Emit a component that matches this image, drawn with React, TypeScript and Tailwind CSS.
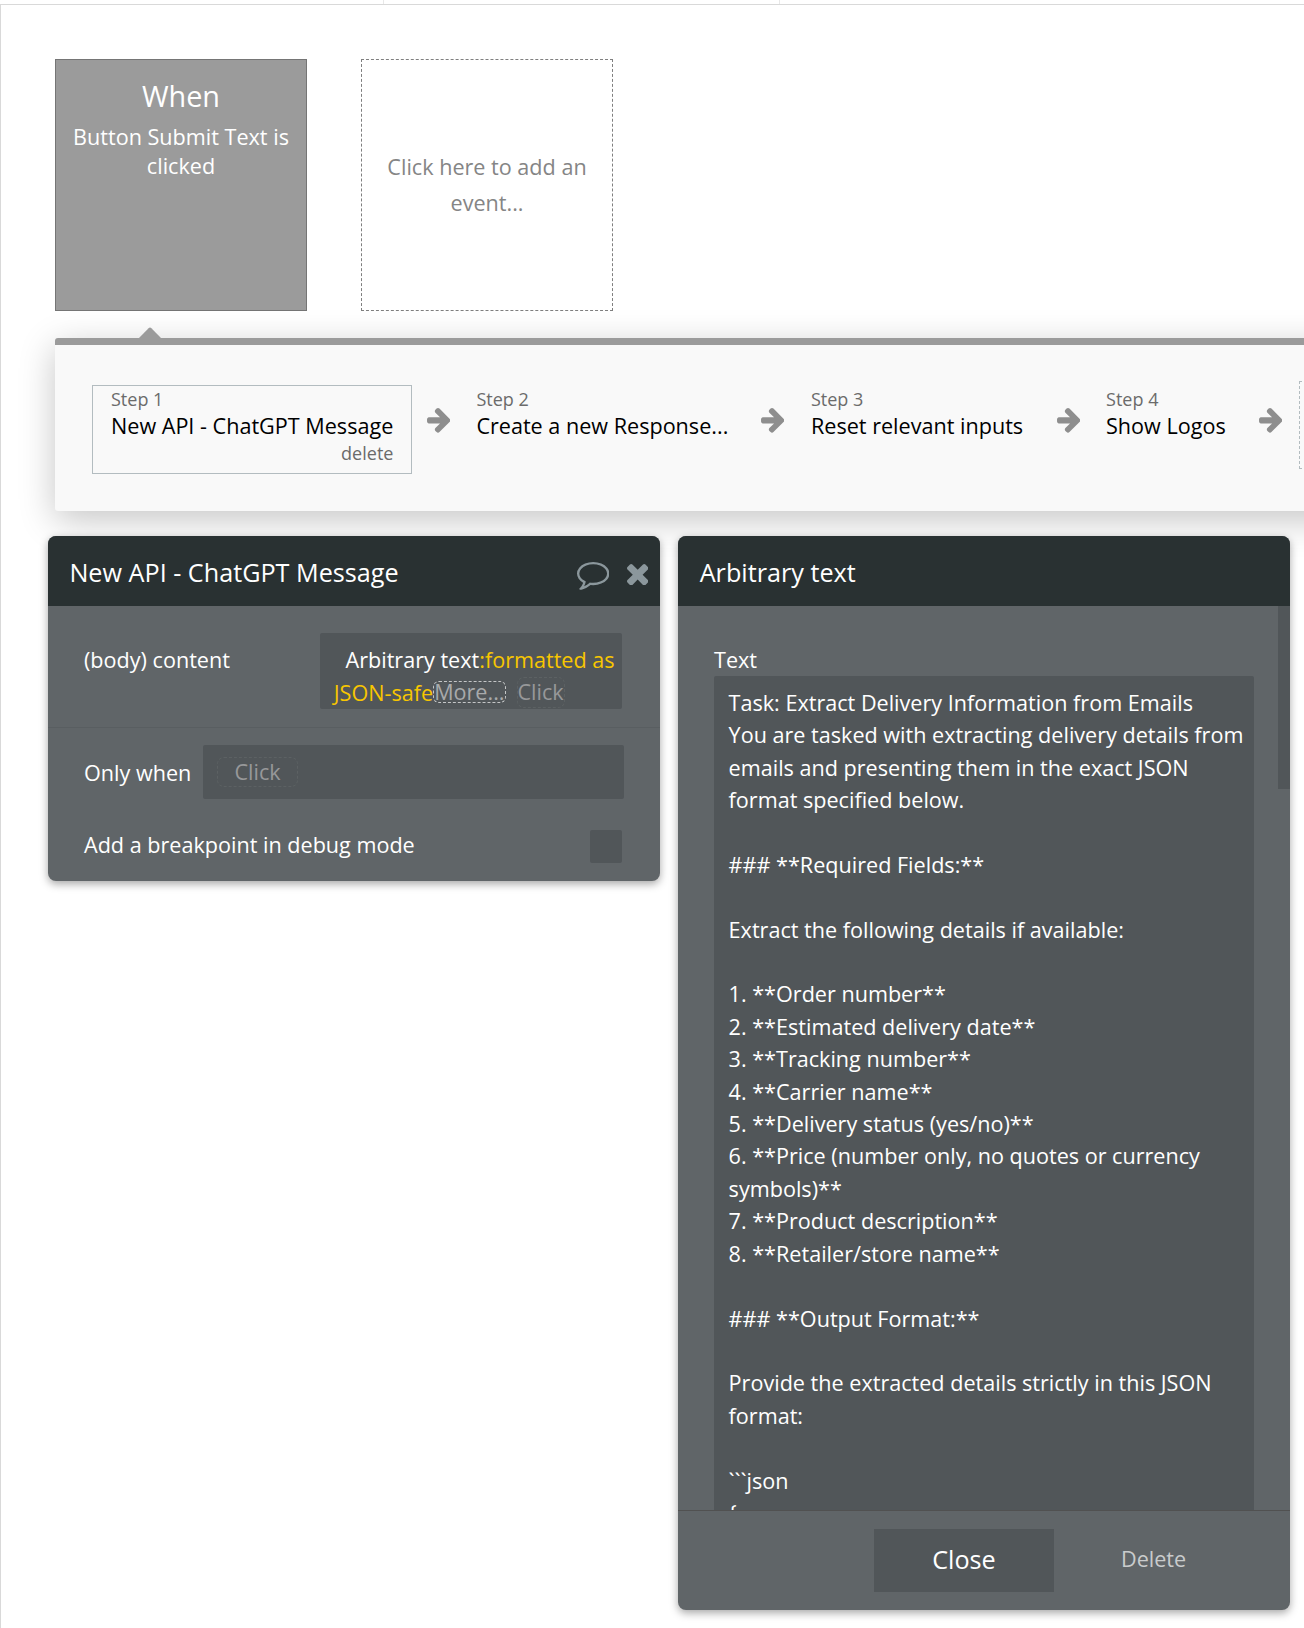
import React from "react";

const PROMPT = `Task: Extract Delivery Information from Emails
You are tasked with extracting delivery details from
emails and presenting them in the exact JSON
format specified below.

### **Required Fields:**

Extract the following details if available:

1. **Order number**
2. **Estimated delivery date**
3. **Tracking number**
4. **Carrier name**
5. **Delivery status (yes/no)**
6. **Price (number only, no quotes or currency
symbols)**
7. **Product description**
8. **Retailer/store name**

### **Output Format:**

Provide the extracted details strictly in this JSON
format:

\`\`\`json
{`;

function ArrowIcon() {
  return (
    <svg viewBox="128 181 1472 1558" className="h-[24.7px] w-[23.4px] shrink-0 fill-[#8e8e8e]">
      <path d="M1600 960q0 54-37 91l-651 651q-39 37-91 37-51 0-90-37l-75-75q-38-38-38-91t38-91l293-293h-704q-52 0-84.5-37.5t-32.5-90.5v-128q0-53 32.5-90.5t84.5-37.5h704l-293-294q-38-36-38-90t38-90l75-75q38-38 90-38 53 0 91 38l651 651q37 35 37 90z" />
    </svg>
  );
}

function CommentIcon() {
  return (
    <svg viewBox="0 256 1792 1536" className="h-[27.8px] w-[32.4px] fill-[#8b979c]">
      <path d="M896 384q-204 0-381.5 69.5t-282 187.5-104.5 255q0 112 71.5 213.5t201.5 175.5l87 50-27 96q-24 91-70 172 152-63 275-171l43-38 57 6q69 8 130 8 204 0 381.5-69.5t282-187.5 104.5-255-104.5-255-282-187.5-381.5-69.5zm896 512q0 174-120 321.5t-326 233-450 85.5q-70 0-145-8-198 175-460 242-49 14-114 22h-5q-15 0-27-10.5t-16-27.5v-1q-3-4-.5-12t2-10 4.5-9.5l6-9 7-8.5 8-9q7-8 31-34.5t34.5-38 31-39.5 32.5-51 27-59 26-76q-157-89-247.5-220t-90.5-281q0-174 120-321.5t326-233 450-85.5 450 85.5 326 233 120 321.5z" />
    </svg>
  );
}

function CloseIcon() {
  return (
    <svg viewBox="302 366 1188 1188" className="size-[21.4px] fill-[#8b979c]">
      <path d="M1490 1322q0 40-28 68l-136 136q-28 28-68 28t-68-28l-294-294-294 294q-28 28-68 28t-68-28l-136-136q-28-28-28-68t28-68l294-294-294-294q-28-28-28-68t28-68l136-136q28-28 68-28t68 28l294 294 294-294q28-28 68-28t68 28l136 136q28 28 28 68t-28 68l-294 294 294 294q28 28 28 68z" />
    </svg>
  );
}

function Step({ n, title, width }: { n: number; title: string; width: string }) {
  return (
    <div className={`shrink-0 whitespace-nowrap pt-[2px] ${width}`}>
      <div className="text-[18px] leading-[24px] text-[#6b6b6b]">Step {n}</div>
      <div className="text-[21.6px] leading-[30px] text-black">{title}</div>
    </div>
  );
}

function Workflow() {
  return (
    <div className="relative mt-[27px] ml-[54px] h-[173px] w-[1400px] rounded-[3px] border-t-[7px] border-[#9b9b9b] bg-[#f9f9f9] shadow-[0_9px_36px_rgba(0,0,0,0.23)]">
      <svg viewBox="0 0 24 12" className="absolute top-[-18px] left-[83px] h-[12px] w-[24px] fill-[#9b9b9b]">
        <path d="M0 12L10.6 1.2Q12 0 13.4 1.2L24 12z" />
      </svg>
      <div className="flex items-start pt-[40px] pl-[37px]">
        <div className="flex h-[89px] w-[320px] shrink-0 flex-col border border-[#b3bcc0] pt-[1px] pr-[17.6px] pl-[18px] whitespace-nowrap">
          <div className="text-[18px] leading-[24px] text-[#6b6b6b]">Step 1</div>
          <div className="text-[21.6px] leading-[30px] text-black">New API - ChatGPT Message</div>
          <div className="text-right text-[18px] leading-[24px] text-[#6b6b6b]">delete</div>
        </div>
        <div className="ml-[14.7px] pt-[23px]"><ArrowIcon /></div>
        <div className="ml-[26.3px] flex"><Step n={2} title="Create a new Response..." width="w-[284.7px]" /></div>
        <div className="pt-[23px]"><ArrowIcon /></div>
        <div className="ml-[26.5px] flex"><Step n={3} title="Reset relevant inputs" width="w-[246px]" /></div>
        <div className="pt-[23px]"><ArrowIcon /></div>
        <div className="ml-[25.7px] flex"><Step n={4} title="Show Logos" width="w-[153px]" /></div>
        <div className="pt-[23px]"><ArrowIcon /></div>
        <div className="-mt-[4px] ml-[16.6px] h-[88px] w-[200px] shrink-0 border border-dashed border-[#b3bcc0]" />
      </div>
    </div>
  );
}

export default function App() {
  return (
    <div className="h-[1628px] w-[1304px] overflow-hidden bg-white font-['Open_Sans',sans-serif] text-[21.6px]">
      <div className="flex h-[4px]">
        <div className="w-[384px] border-r border-[#e8e8e8]" />
        <div className="w-[396px] border-r border-[#e8e8e8]" />
      </div>
      <div className="h-[1624px] border-t border-l border-[#d9d9d9]">
        <div className="flex gap-[54px] pt-[54px] pl-[54px]">
          <div className="h-[252px] w-[252px] border border-[#757575] bg-[#9b9b9b] pt-[16px] text-center text-white">
            <div className="text-[28.8px] leading-[39px]">When</div>
            <div className="mt-[7px] leading-[29px]">
              Button Submit Text is
              <br />
              clicked
            </div>
          </div>
          <div className="h-[252px] w-[252px] border border-dashed border-[#7f7f7f] pt-[89px] text-center leading-[36px] text-[#858585]">
            Click here to add an
            <br />
            event...
          </div>
        </div>

        <Workflow />

        <div className="relative mt-[25px] ml-[47px] flex items-start gap-[18px] text-white">
          <section className="h-[345px] w-[612px] overflow-hidden rounded-[8px] bg-[#606568] shadow-[0_3px_9px_rgba(0,0,0,0.35)]">
            <header className="flex h-[70px] bg-[#293132] pl-[21.4px]">
              <h2 className="pt-[19px] text-[25.2px] leading-[34px]">New API - ChatGPT Message</h2>
              <div className="mr-[11.7px] ml-auto flex pt-[26px]">
                <CommentIcon />
                <div className="ml-[18px] pt-[2px]"><CloseIcon /></div>
              </div>
            </header>
            <div className="flex h-[122px] border-b border-[#595e61] pt-[27px] pl-[36px]">
              <div className="w-[236px] pt-[11px] leading-[32.4px]">(body) content</div>
              <div className="h-[76px] w-[302px] rounded-[2px] bg-[#515659] pt-[11px] pl-[13.8px] leading-[32.4px] whitespace-nowrap">
                <div className="pl-[11.7px]">
                  Arbitrary text<span className="text-[#f8c600]">:formatted as</span>
                </div>
                <div className="flex text-[#f8c600]">
                  <span className="pt-[0.6px]">JSON-safe</span>
                  <span className="mt-[5px] h-[22px] w-[73px] rounded-[6px] border border-dashed border-[#c4c6c7] leading-[20px] text-[#a8aaab]">More...</span>
                  <span className="mt-[1px] ml-[10.4px] h-[31px] w-[48px] rounded-[7px] border border-dashed border-[#5c6163] text-center leading-[28px] text-[#979899]">Click</span>
                </div>
              </div>
            </div>
            <div className="flex h-[71px] pt-[17px] pl-[36px]">
              <div className="w-[119px] pt-[12px] leading-[32.4px]">Only when</div>
              <div className="h-[54px] w-[421px] rounded-[2px] bg-[#515659] pt-[12px] pl-[14px]">
                <div className="h-[30px] w-[81px] rounded-[7px] border border-dashed border-[#5c6163] text-center leading-[28px] text-[#979899]">Click</div>
              </div>
            </div>
            <div className="flex justify-between pt-[31px] pr-[38px] pl-[36px]">
              <div className="-mt-[1px] leading-[32.4px]">Add a breakpoint in debug mode</div>
              <div className="h-[33px] w-[32px] rounded-[2px] bg-[#515659]" />
            </div>
          </section>

          <section className="flex h-[1074px] w-[612px] flex-col overflow-hidden rounded-[8px] bg-[#606568] shadow-[0_3px_9px_rgba(0,0,0,0.35)]">
            <header className="h-[70px] shrink-0 bg-[#293132] pl-[21.7px]">
              <h2 className="pt-[19px] text-[25.2px] leading-[34px]">Arbitrary text</h2>
            </header>
            <div className="flex h-[904px] shrink-0 overflow-hidden">
              <div className="w-[600px] pt-[38px] pl-[36px]">
                <div className="h-[32px] leading-[32.4px]">Text</div>
                <div className="h-[834px] w-[540px] rounded-t-[2px] bg-[#515659] pt-[10.8px] pl-[14.6px] leading-[32.4px] whitespace-pre">{PROMPT}</div>
              </div>
              <div className="h-[183px] w-[12px] bg-[#515659]" />
            </div>
            <footer className="flex h-[100px] border-t border-[#515151] pt-[18px] pl-[196px]">
              <div className="h-[63px] w-[180px] bg-[#515659] text-center text-[25.2px] leading-[61px]">Close</div>
              <div className="ml-[67px] leading-[60px] text-[#c9cbcc]">Delete</div>
            </footer>
          </section>
        </div>
      </div>
    </div>
  );
}
